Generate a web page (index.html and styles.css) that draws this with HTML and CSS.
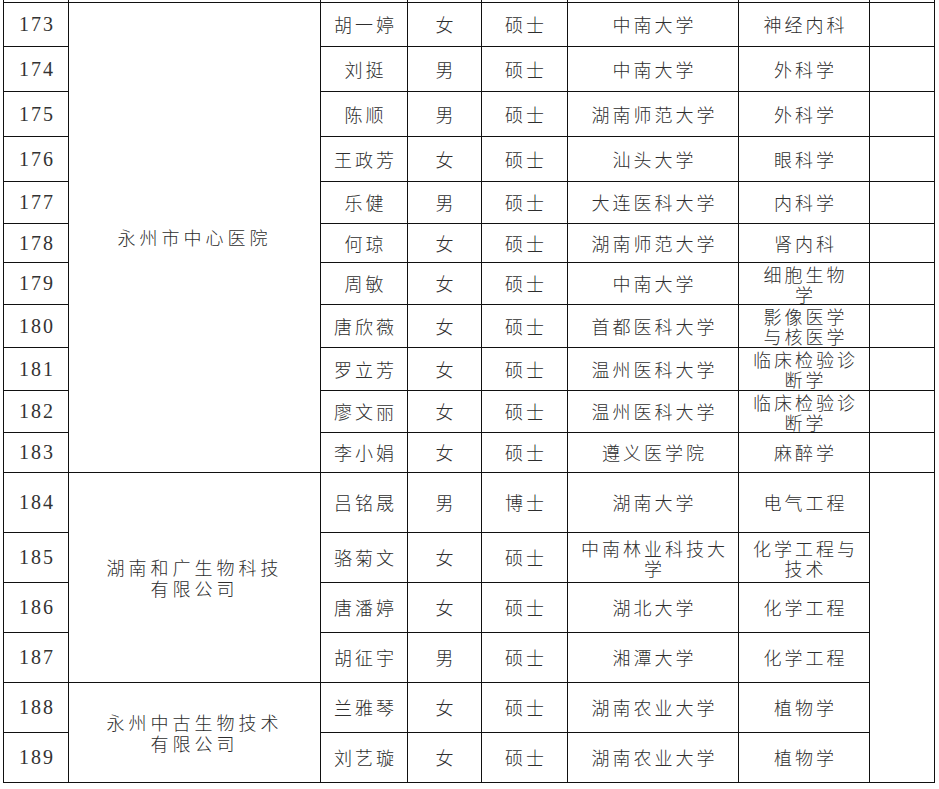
FILE: index.html
```html
<!DOCTYPE html>
<html lang="zh-CN">
<head>
<meta charset="utf-8">
<title>人才名单</title>
<link rel="stylesheet" href="styles.css">
</head>
<body>
<table class="roster">
  <colgroup>
    <col class="c-no"><col class="c-org"><col class="c-name"><col class="c-sex"><col class="c-deg"><col class="c-uni"><col class="c-major"><col class="c-note">
  </colgroup>
  <tr class="stub"><td></td><td></td><td></td><td></td><td></td><td></td><td></td><td></td></tr>
  <tr class="h44"><td class="no">173</td><td class="org" rowspan="11">永州市中心医院</td><td>胡一婷</td><td>女</td><td>硕士</td><td>中南大学</td><td>神经内科</td><td></td></tr>
  <tr class="h45"><td class="no">174</td><td>刘挺</td><td>男</td><td>硕士</td><td>中南大学</td><td>外科学</td><td></td></tr>
  <tr class="h45"><td class="no">175</td><td>陈顺</td><td>男</td><td>硕士</td><td>湖南师范大学</td><td>外科学</td><td></td></tr>
  <tr class="h45"><td class="no">176</td><td>王政芳</td><td>女</td><td>硕士</td><td>汕头大学</td><td>眼科学</td><td></td></tr>
  <tr class="h42"><td class="no">177</td><td>乐健</td><td>男</td><td>硕士</td><td>大连医科大学</td><td>内科学</td><td></td></tr>
  <tr class="h39"><td class="no">178</td><td>何琼</td><td>女</td><td>硕士</td><td>湖南师范大学</td><td>肾内科</td><td></td></tr>
  <tr class="h42"><td class="no">179</td><td>周敏</td><td>女</td><td>硕士</td><td>中南大学</td><td class="two">细胞生物<br>学</td><td></td></tr>
  <tr class="h43"><td class="no">180</td><td>唐欣薇</td><td>女</td><td>硕士</td><td>首都医科大学</td><td class="two">影像医学<br>与核医学</td><td></td></tr>
  <tr class="h43"><td class="no">181</td><td>罗立芳</td><td>女</td><td>硕士</td><td>温州医科大学</td><td class="two">临床检验诊<br>断学</td><td></td></tr>
  <tr class="h42"><td class="no">182</td><td>廖文丽</td><td>女</td><td>硕士</td><td>温州医科大学</td><td class="two">临床检验诊<br>断学</td><td></td></tr>
  <tr class="h40"><td class="no">183</td><td>李小娟</td><td>女</td><td>硕士</td><td>遵义医学院</td><td>麻醉学</td><td></td></tr>
  <tr class="h60"><td class="no">184</td><td class="org" rowspan="4">湖南和广生物科技<br>有限公司</td><td>吕铭晟</td><td>男</td><td>博士</td><td>湖南大学</td><td>电气工程</td><td rowspan="6"></td></tr>
  <tr class="h50"><td class="no">185</td><td>骆菊文</td><td>女</td><td>硕士</td><td class="two">中南林业科技大<br>学</td><td class="two">化学工程与<br>技术</td></tr>
  <tr class="h50"><td class="no">186</td><td>唐潘婷</td><td>女</td><td>硕士</td><td>湖北大学</td><td>化学工程</td></tr>
  <tr class="h50"><td class="no">187</td><td>胡征宇</td><td>男</td><td>硕士</td><td>湘潭大学</td><td>化学工程</td></tr>
  <tr class="h50"><td class="no">188</td><td class="org" rowspan="2">永州中古生物技术<br>有限公司</td><td>兰雅琴</td><td>女</td><td>硕士</td><td>湖南农业大学</td><td>植物学</td></tr>
  <tr class="h50"><td class="no">189</td><td>刘艺璇</td><td>女</td><td>硕士</td><td>湖南农业大学</td><td>植物学</td></tr>
</table>
</body>
</html>
```

FILE: styles.css
```css
html, body {
  margin: 0;
  padding: 0;
  background: #ffffff;
}

body {
  padding-left: 3px;
  font-family: "Noto Sans CJK SC", "Noto Sans", sans-serif;
  color: #2e2e2e;
}

.roster {
  border-collapse: collapse;
  table-layout: fixed;
  width: 931px;
}

.c-no { width: 65px; }
.c-org { width: 252px; }
.c-name { width: 87px; }
.c-sex { width: 74px; }
.c-deg { width: 86px; }
.c-uni { width: 171px; }
.c-major { width: 131px; }
.c-note { width: 65px; }

.roster td {
  border: 1px solid #111111;
  padding: 0 0 0 3px;
  text-align: center;
  vertical-align: middle;
  font-size: 18px;
  line-height: 21px;
  letter-spacing: 3px;
  font-weight: 300;
  white-space: nowrap;
}

.roster td.org {
  letter-spacing: 4px;
  padding-left: 0;
}

.roster td.no {
  font-family: "Liberation Serif", "Times New Roman", serif;
  font-size: 20px;
  letter-spacing: 2px;
  padding-left: 2px;
  font-weight: 400;
  color: #333333;
}

.roster td.two {
  line-height: 20px;
}

.stub td {
  border-top: 0;
  height: 2px;
  padding: 0;
}

.h39 { height: 39px; }
.h40 { height: 40px; }
.h42 { height: 42px; }
.h43 { height: 43px; }
.h44 { height: 44px; }
.h45 { height: 45px; }
.h50 { height: 50px; }
.h60 { height: 60px; }
```
